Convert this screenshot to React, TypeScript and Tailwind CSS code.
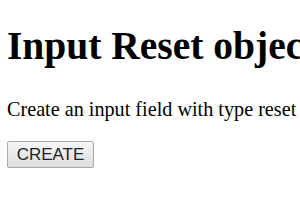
export default function App() {
  return (
    <div className="w-[300px] h-[210px] overflow-hidden bg-white pl-[7px] pt-[26px] text-black" style={{ fontFamily: '"Liberation Serif", "Times New Roman", serif' }}>
      <h1 className="text-[39.5px] font-bold leading-[41px] m-0 whitespace-nowrap">Input Reset object</h1>
      <p className="text-[20.2px] leading-[23px] mt-[31px] mb-0 whitespace-nowrap">Create an input field with type reset</p>
      <button
        className="mt-[20px] h-[27px] w-[87px] border border-[#a9a9a9] rounded-[2px] bg-gradient-to-b from-[#f6f6f6] to-[#dddddd] text-[17px] leading-[20px] text-[#222] block"
        style={{ fontFamily: '"Liberation Sans", Arial, sans-serif' }}
      >
        CREATE
      </button>
    </div>
  );
}
